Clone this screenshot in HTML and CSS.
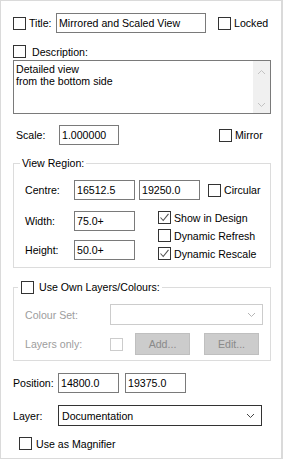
FILE: index.html
```html
<!DOCTYPE html>
<html lang="en">
<head>
  <meta charset="UTF-8" />
  <meta name="viewport" content="width=device-width, initial-scale=1" />
  <title>View Properties</title>
  <link rel="stylesheet" href="styles.css">
</head>
<body>
  <div class="dialog">

    <div class="row title-row">
      <span class="cb"></span>
      <span class="title-label">Title:</span>
      <div class="field title-field">Mirrored and Scaled View</div>
      <span class="cb locked-cb"></span>
      <span class="cb-text">Locked</span>
    </div>

    <div class="row desc-row">
      <span class="cb"></span>
      <span class="desc-label">Description:</span>
    </div>

    <div class="memo">
      <div class="memo-text">Detailed view<br>from the bottom side</div>
      <div class="memo-scroll">
        <svg width="9" height="6" viewBox="0 0 9 6"><path d="M1 5 L4.5 1.5 L8 5" fill="none" stroke="#c2c2c2" stroke-width="1"/></svg>
        <svg width="9" height="6" viewBox="0 0 9 6"><path d="M1 1 L4.5 4.5 L8 1" fill="none" stroke="#c2c2c2" stroke-width="1"/></svg>
      </div>
    </div>

    <div class="row scale-row">
      <span class="scale-label">Scale:</span>
      <div class="field scale-field">1.000000</div>
      <span class="cb mirror-cb"></span>
      <span class="cb-text">Mirror</span>
    </div>

    <fieldset class="group region">
      <legend class="region-legend">View Region:</legend>

      <div class="row centre-row">
        <span class="inner-label">Centre:</span>
        <div class="field num">16512.5</div>
        <div class="field num second">19250.0</div>
        <span class="cb circular-cb"></span>
        <span class="cb-text">Circular</span>
      </div>

      <div class="region-bottom">
        <div class="size-col">
          <div class="row size-row">
            <span class="inner-label">Width:</span>
            <div class="field num">75.0+</div>
          </div>
          <div class="row size-row">
            <span class="inner-label">Height:</span>
            <div class="field num">50.0+</div>
          </div>
        </div>
        <div class="check-col">
          <div class="check-item">
            <span class="cb">
              <svg width="11" height="11" viewBox="0 0 11 11"><path d="M1.5 5.5 L4.2 8.5 L9.5 1.8" fill="none" stroke="#555" stroke-width="1.1"/></svg>
            </span>
            <span class="cb-text">Show in Design</span>
          </div>
          <div class="check-item">
            <span class="cb"></span>
            <span class="cb-text">Dynamic Refresh</span>
          </div>
          <div class="check-item">
            <span class="cb">
              <svg width="11" height="11" viewBox="0 0 11 11"><path d="M1.5 5.5 L4.2 8.5 L9.5 1.8" fill="none" stroke="#555" stroke-width="1.1"/></svg>
            </span>
            <span class="cb-text">Dynamic Rescale</span>
          </div>
        </div>
      </div>
    </fieldset>

    <fieldset class="group layers">
      <legend class="layers-legend">
        <span class="cb"></span>
        <span class="legend-text">Use Own Layers/Colours:</span>
      </legend>

      <div class="row colour-row">
        <span class="inner-label wide disabled">Colour Set:</span>
        <div class="combo combo-disabled">
          <span></span>
          <svg width="9" height="6" viewBox="0 0 9 6"><path d="M1 1 L4.5 4.5 L8 1" fill="none" stroke="#b5b5b5" stroke-width="1"/></svg>
        </div>
      </div>

      <div class="row layers-row">
        <span class="inner-label wide disabled">Layers only:</span>
        <span class="cb cb-disabled"></span>
        <button class="btn" disabled>Add...</button>
        <button class="btn" disabled>Edit...</button>
      </div>
    </fieldset>

    <div class="row position-row">
      <span class="outer-label">Position:</span>
      <div class="field num">14800.0</div>
      <div class="field num pos-second">19375.0</div>
    </div>

    <div class="row layer-row">
      <span class="outer-label">Layer:</span>
      <div class="combo combo-active">
        <span>Documentation</span>
        <svg width="9" height="6" viewBox="0 0 9 6"><path d="M1 1 L4.5 4.5 L8 1" fill="none" stroke="#444" stroke-width="1"/></svg>
      </div>
    </div>

    <div class="row magnifier-row">
      <span class="cb"></span>
      <span class="cb-text">Use as Magnifier</span>
    </div>

  </div>
</body>
</html>
```

FILE: styles.css
```css
body {
  margin: 0;
  background: #ffffff;
  font-family: "Liberation Sans", Arial, sans-serif;
  font-size: 10.6px;
  color: #000;
}

.dialog {
  width: 283px;
  height: 459px;
  box-sizing: border-box;
  border: 1px solid #dadada;
  border-right-width: 2px;
  padding: 12px 0 0 12px;
}

.row {
  display: flex;
  align-items: center;
}

/* checkbox */
.cb {
  width: 13px;
  height: 13px;
  box-sizing: border-box;
  border: 1px solid #333;
  background: #fff;
  flex: none;
  display: flex;
  align-items: center;
  justify-content: center;
}

.cb-disabled {
  border-color: #cccccc;
}

.cb-text {
  margin-left: 3px;
  white-space: nowrap;
}

/* text boxes */
.field {
  height: 20px;
  box-sizing: border-box;
  border: 1px solid #7a7a7a;
  padding: 0 2px;
  line-height: 18px;
  white-space: nowrap;
  overflow: hidden;
  flex: none;
}

.num {
  width: 61px;
}

/* title */
.title-row {
  height: 20px;
}

.title-label {
  margin-left: 3px;
  width: 27px;
}

.title-field {
  width: 150px;
}

.locked-cb {
  margin-left: 12px;
}

/* description */
.desc-row {
  height: 13px;
  margin-top: 12px;
}

.desc-label {
  margin-left: 6px;
}

.memo {
  margin-top: 2px;
  width: 258px;
  height: 54px;
  box-sizing: border-box;
  border: 1px solid #7a7a7a;
  display: flex;
}

.memo-text {
  flex: 1;
  padding: 2px 2px;
  line-height: 12px;
}

.memo-scroll {
  width: 17px;
  background: #f0f0f0;
  display: flex;
  flex-direction: column;
  justify-content: space-between;
  align-items: center;
  padding: 8px 0 5px;
  box-sizing: border-box;
}

/* scale */
.scale-row {
  height: 20px;
  margin-top: 11px;
}

.scale-label {
  margin-left: 3px;
  width: 43px;
}

.scale-field {
  width: 60px;
}

.mirror-cb {
  margin-left: 100px;
}

/* group boxes */
.group {
  margin: 0;
  width: 258px;
  box-sizing: border-box;
  border: 1px solid #dcdcdc;
  padding: 0;
}

.group legend {
  line-height: 13px;
  padding: 0 2px;
}

.region {
  margin-top: 12px;
  padding: 10px 0 7px 0;
}

.region-legend {
  margin-left: 6px;
}

.inner-label {
  margin-left: 11px;
  width: 49px;
  flex: none;
}

.inner-label.wide {
  width: 85px;
}

.disabled {
  color: #9d9d9d;
}

.centre-row {
  height: 20px;
}

.second {
  margin-left: 4px;
}

.circular-cb {
  margin-left: 8px;
}

.region-bottom {
  display: flex;
  margin-top: 11px;
}

.size-col {
  display: flex;
  flex-direction: column;
  gap: 9px;
}

.size-row {
  height: 20px;
}

.check-col {
  margin-left: 23px;
  display: flex;
  flex-direction: column;
  gap: 5px;
}

.check-item {
  display: flex;
  align-items: center;
  height: 13px;
}

/* own layers */
.layers {
  margin-top: 13px;
  padding: 10px 0 5px 0;
}

.layers-legend {
  margin-left: 4px;
  display: flex;
  align-items: center;
}

.layers-legend .cb {
  margin-left: 1px;
}

.legend-text {
  margin-left: 5px;
}

.colour-row {
  height: 21px;
}

.combo {
  height: 21px;
  box-sizing: border-box;
  display: flex;
  align-items: center;
  justify-content: space-between;
  padding: 0 6px 0 3px;
  flex: none;
}

.combo-disabled {
  width: 153px;
  border: 1px solid #cccccc;
}

.combo-active {
  width: 204px;
  border: 1px solid #333;
}

.layers-row {
  height: 22px;
  margin-top: 8px;
}

.btn {
  height: 22px;
  width: 55px;
  margin: 0 0 0 12px;
  padding: 0;
  background: #cccccc;
  border: 1px solid #bfbfbf;
  color: #8a8a8a;
  font-family: inherit;
  font-size: inherit;
}

.btn + .btn {
  margin-left: 14px;
}

/* bottom section */
.outer-label {
  width: 45px;
  flex: none;
}

.position-row {
  height: 20px;
  margin-top: 12px;
}

.pos-second {
  margin-left: 6px;
}

.layer-row {
  height: 21px;
  margin-top: 12px;
}

.magnifier-row {
  height: 13px;
  margin-top: 11px;
  padding-left: 6px;
}

.magnifier-row .cb-text {
  margin-left: 4px;
}
```
